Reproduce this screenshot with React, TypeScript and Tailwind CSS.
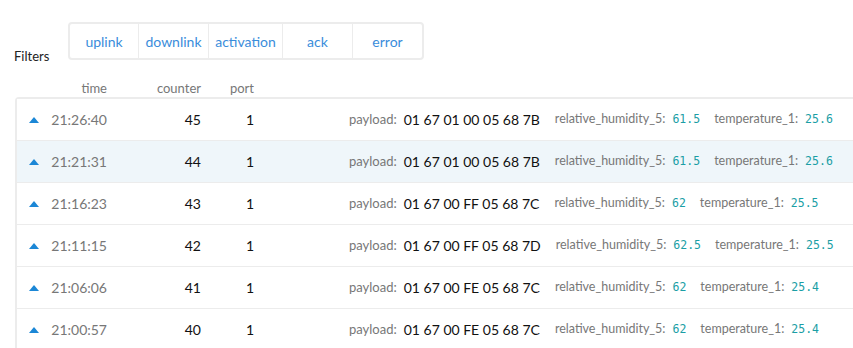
import React from "react";

const filters = [
  { label: "uplink", w: "w-[68px]" },
  { label: "downlink", w: "w-[70px]" },
  { label: "activation", w: "w-[74px]" },
  { label: "ack", w: "w-[70px]" },
  { label: "error", w: "w-[70px]" },
];

const rows = [
  { time: "21:26:40", counter: 45, port: 1, payload: "01 67 01 00 05 68 7B", hum: "61.5", temp: "25.6" },
  { time: "21:21:31", counter: 44, port: 1, payload: "01 67 01 00 05 68 7B", hum: "61.5", temp: "25.6" },
  { time: "21:16:23", counter: 43, port: 1, payload: "01 67 00 FF 05 68 7C", hum: "62", temp: "25.5" },
  { time: "21:11:15", counter: 42, port: 1, payload: "01 67 00 FF 05 68 7D", hum: "62.5", temp: "25.5" },
  { time: "21:06:06", counter: 41, port: 1, payload: "01 67 00 FE 05 68 7C", hum: "62", temp: "25.4" },
  { time: "21:00:57", counter: 40, port: 1, payload: "01 67 00 FE 05 68 7C", hum: "62", temp: "25.4" },
];

function UpArrow() {
  return (
    <svg width="10" height="6" viewBox="0 0 10 6" className="shrink-0">
      <path d="M5 0 L10 6 L0 6 Z" fill="#1b87d6" />
    </svg>
  );
}

export default function App() {
  return (
    <div className="w-[853px] h-[348px] overflow-hidden bg-white font-['Lato','Liberation_Sans',sans-serif]">
      <div className="flex items-end pt-[22px] pl-[14px]">
        <span className="text-[13px] text-[#222] w-[54px] leading-none mb-[-3px]">Filters</span>
        <div className="flex h-[38px] border-2 border-[#ececec] rounded-[4px]">
          {filters.map((f, i) => (
            <div
              key={f.label}
              className={`${f.w} flex items-center justify-center text-[14px] text-[#3a8ddb] ${i > 0 ? "border-l border-[#ececec]" : ""}`}
            >
              {f.label}
            </div>
          ))}
        </div>
      </div>

      <div className="flex items-center h-[37px] pt-[21px] pl-[17px] text-[13px] text-[#777]">
        <div className="w-[90px] text-right">time</div>
        <div className="w-[94px] text-right">counter</div>
        <div className="w-[53px] text-right">port</div>
      </div>

      <div className="ml-[15px] w-[900px] border-t-2 border-l-2 border-[#ececec] rounded-tl-[4px]">
        {rows.map((r, i) => (
          <div
            key={r.time}
            className={`flex items-center h-[42px] border-b border-[#ececec] ${i === 1 ? "bg-[#eff6fa]" : "bg-white"}`}
          >
            <div className="w-[34px] pl-[12px] flex items-center">
              <UpArrow />
            </div>
            <div className="w-[56px] text-right text-[14px] text-[#777]">{r.time}</div>
            <div className="w-[94px] text-right text-[14px] text-[#111]">{r.counter}</div>
            <div className="w-[53px] text-right text-[14px] text-[#111]">{r.port}</div>
            <div className="flex items-center ml-[95px]">
              <span className="text-[13px] text-[#777]">payload:</span>
              <span className="ml-[7px] text-[14px] text-[#111]">{r.payload}</span>
              <span className="ml-[15px] text-[12.5px] text-[#777]">relative_humidity_5:</span>
              <span className="ml-[7px] text-[11.5px] text-[#1a9ea5] font-['DejaVu_Sans_Mono',monospace]">{r.hum}</span>
              <span className="ml-[14px] text-[12.5px] text-[#777]">temperature_1:</span>
              <span className="ml-[7px] text-[11.5px] text-[#1a9ea5] font-['DejaVu_Sans_Mono',monospace]">{r.temp}</span>
            </div>
          </div>
        ))}
      </div>
    </div>
  );
}
